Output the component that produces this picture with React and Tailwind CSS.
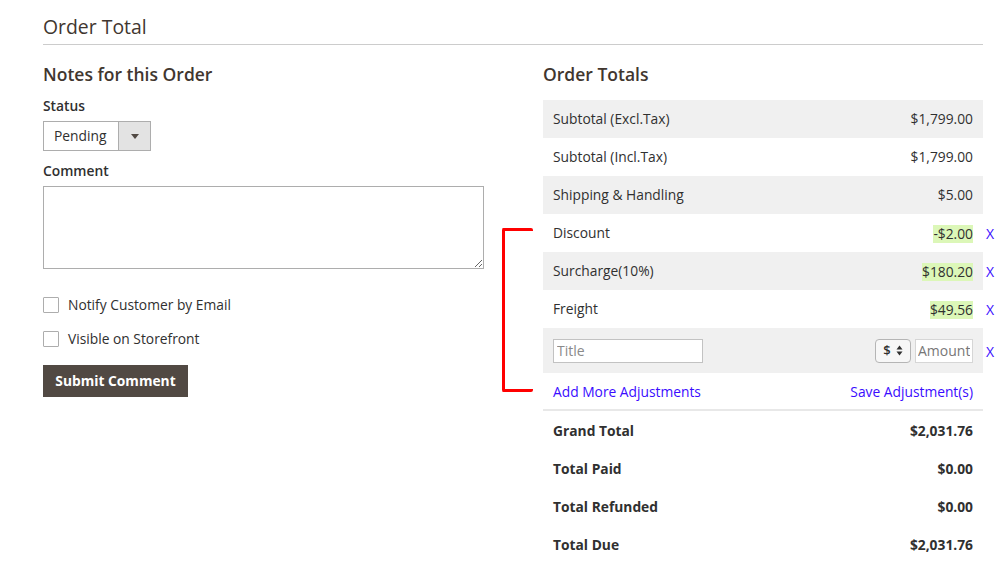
import React from "react";

function XBtn() {
  return (
    <span className="absolute left-full top-1/2 -translate-y-1/2 ml-[3px] pt-[2px] text-[14px] leading-none text-[#3a0cff]">
      X
    </span>
  );
}

function Row({ label, value, gray, bold, highlight, x }) {
  return (
    <div
      className={`relative flex h-[38px] items-center justify-between px-[10px] ${
        bold ? "pt-[3px]" : "pt-[1px]"
      } ${gray ? "bg-[#f0f0f0]" : "bg-white"} ${bold ? "font-bold" : ""}`}
    >
      <span>{label}</span>
      <span className={highlight ? "bg-[#dcf7b8] leading-[18px]" : ""}>{value}</span>
      {x && <XBtn />}
    </div>
  );
}

export default function App() {
  return (
    <div
      className="min-h-[581px] w-[998px] bg-white pl-[43px] pr-[15px] text-[13.8px] text-[#303030]"
      style={{ fontFamily: "'Open Sans', 'Noto Sans', sans-serif" }}
    >
      <div className="border-b border-[#cccccc] pb-[3px] pt-[13px]">
        <h2 className="text-[19.4px] leading-[28px] text-[#41362f]">Order Total</h2>
      </div>

      <div className="flex">
        {/* Left column */}
        <div className="w-[441px] pt-[17px]">
          <h3 className="text-[17.5px] font-semibold leading-[24px] text-[#41362f]">
            Notes for this Order
          </h3>
          <div className="mt-[10px] font-semibold leading-[20px]">Status</div>
          <div className="mt-[5px] flex h-[30px] w-[108px] border border-[#adadad]">
            <div className="flex flex-1 items-center pl-[10px] leading-none">Pending</div>
            <div className="flex w-[32px] items-center justify-center border-l border-[#adadad] bg-[#e3e3e3]">
              <svg width="8" height="5" viewBox="0 0 8 5">
                <path d="M0 0 H8 L4 5 Z" fill="#514943" />
              </svg>
            </div>
          </div>
          <div className="mt-[10px] font-semibold leading-[20px]">Comment</div>
          <textarea className="mt-[5px] block h-[83px] w-[441px] border border-[#adadad] bg-white p-[6px] outline-none" />
          <label className="mt-[26px] flex h-[20px] items-center gap-[9px]">
            <span className="h-[16px] w-[16px] rounded-[1px] border border-[#adadad] bg-white" />
            <span>Notify Customer by Email</span>
          </label>
          <label className="mt-[14px] flex h-[20px] items-center gap-[9px]">
            <span className="h-[16px] w-[16px] rounded-[1px] border border-[#adadad] bg-white" />
            <span>Visible on Storefront</span>
          </label>
          <button className="mt-[16px] h-[32px] w-[145px] bg-[#514943] font-bold text-white">
            Submit Comment
          </button>
        </div>

        {/* Right column */}
        <div className="ml-[59px] w-[440px] pt-[17px]">
          <h3 className="text-[17.5px] font-semibold leading-[24px] text-[#41362f]">Order Totals</h3>
          <div className="relative mt-[14px]">
            <div className="absolute left-[-41px] top-[128px] h-[164px] w-[31px] rounded-[2px] border-y-[3px] border-l-[3px] border-[#ff0000]" />
            <Row label="Subtotal (Excl.Tax)" value="$1,799.00" gray />
            <Row label="Subtotal (Incl.Tax)" value="$1,799.00" />
            <Row label="Shipping & Handling" value="$5.00" gray />
            <Row label="Discount" value="-$2.00" highlight x />
            <Row label="Surcharge(10%)" value="$180.20" gray highlight x />
            <Row label="Freight" value="$49.56" highlight x />
            <div className="relative flex h-[45px] items-center justify-between bg-[#f0f0f0] px-[10px]">
              <input
                placeholder="Title"
                className="h-[24px] w-[150px] border border-[#c2c2c2] bg-white px-[3px] text-[14px] outline-none placeholder:text-[#8a8a8a]"
              />
              <div className="flex items-center gap-[4px]">
                <div className="flex h-[24px] w-[36px] items-center justify-center gap-[5px] rounded-[4px] border border-[#b5b5b5] bg-[#f7f7f7]">
                  <span className="text-[13px] font-semibold text-[#303030]">$</span>
                  <svg width="7" height="11" viewBox="0 0 7 11">
                    <path d="M0.5 4.5 L3.5 0.5 L6.5 4.5 Z M0.5 6.5 L3.5 10.5 L6.5 6.5 Z" fill="#303030" />
                  </svg>
                </div>
                <input
                  placeholder="Amount"
                  className="h-[24px] w-[58px] border border-[#d6d6d6] bg-white px-[2px] text-[14px] outline-none placeholder:text-[#777777]"
                />
              </div>
              <XBtn />
            </div>
            <div className="flex h-[38px] items-center justify-between border-b-2 border-[#e8e8e8] px-[10px] pt-[2px] text-[#3a0cff]">
              <span>Add More Adjustments</span>
              <span>Save Adjustment(s)</span>
            </div>
            <Row label="Grand Total" value="$2,031.76" bold />
            <Row label="Total Paid" value="$0.00" bold />
            <Row label="Total Refunded" value="$0.00" bold />
            <Row label="Total Due" value="$2,031.76" bold />
          </div>
        </div>
      </div>
    </div>
  );
}
